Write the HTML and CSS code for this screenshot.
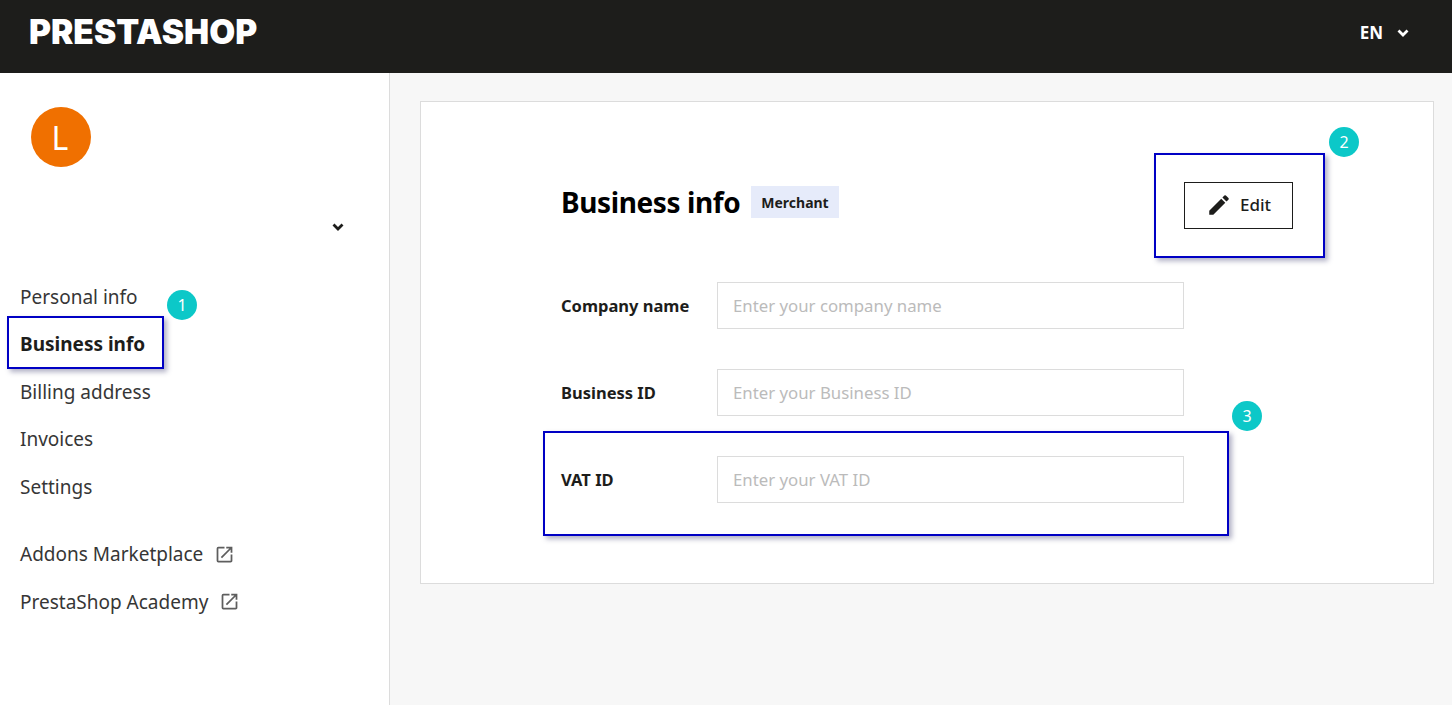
FILE: index.html
```html
<!DOCTYPE html>
<html lang="en">
<head>
<meta charset="utf-8">
<title>Business info</title>
<link rel="stylesheet" href="styles.css">
</head>
<body>
<header class="topbar">
  <div class="logo">PRESTASHOP</div>
  <div class="lang">
    <span>EN</span>
    <svg class="chev" viewBox="0 0 12 8" width="12" height="8"><path d="M1.500 1.500 6 6l4.500-4.500" fill="none" stroke="currentColor" stroke-width="2.800"/></svg>
  </div>
</header>
<div class="layout">
  <aside class="sidebar">
    <div class="avatar">L</div>
    <div class="account">
      <svg class="chev" viewBox="0 0 12 8" width="12" height="8"><path d="M1.500 1.500 6 6l4.500-4.500" fill="none" stroke="currentColor" stroke-width="2.800"/></svg>
    </div>
    <nav class="nav">
      <a class="nav-item">Personal info</a>
      <a class="nav-item active">Business info</a>
      <a class="nav-item">Billing address</a>
      <a class="nav-item">Invoices</a>
      <a class="nav-item">Settings</a>
    </nav>
    <nav class="nav nav-ext">
      <a class="nav-item">Addons Marketplace
        <svg class="ext" viewBox="0 0 24 24" width="21" height="21"><path d="M19 19H5V5h7V3H5a2 2 0 0 0-2 2v14a2 2 0 0 0 2 2h14c1.100 0 2-.9 2-2v-7h-2v7zM14 3v2h3.590l-9.830 9.830 1.410 1.410L19 6.410V10h2V3h-7z"/></svg>
      </a>
      <a class="nav-item">PrestaShop Academy
        <svg class="ext" viewBox="0 0 24 24" width="21" height="21"><path d="M19 19H5V5h7V3H5a2 2 0 0 0-2 2v14a2 2 0 0 0 2 2h14c1.100 0 2-.9 2-2v-7h-2v7zM14 3v2h3.590l-9.830 9.830 1.410 1.410L19 6.410V10h2V3h-7z"/></svg>
      </a>
    </nav>
  </aside>
  <main class="content">
    <section class="card">
      <div class="card-head">
        <div class="title-group">
          <h1 class="title">Business info</h1>
          <span class="tag">Merchant</span>
        </div>
        <button class="edit-btn" type="button">
          <svg viewBox="0 0 24 24" width="26" height="26"><path d="M3 17.250V21h3.750L17.810 9.940l-3.750-3.750L3 17.250zM20.710 7.040a1 1 0 0 0 0-1.410l-2.340-2.340a1 1 0 0 0-1.410 0l-1.830 1.830 3.750 3.750 1.830-1.830z"/></svg>
          Edit
        </button>
      </div>
      <div class="fields">
        <label class="field"><span class="field-label">Company name</span><input class="input" placeholder="Enter your company name"></label>
        <label class="field"><span class="field-label">Business ID</span><input class="input" placeholder="Enter your Business ID"></label>
        <label class="field"><span class="field-label">VAT ID</span><input class="input" placeholder="Enter your VAT ID"></label>
      </div>
    </section>
  </main>
</div>
<div class="mark mark-1"></div>
<div class="mark mark-2"></div>
<div class="mark mark-3"></div>
<div class="step step-1">1</div>
<div class="step step-2">2</div>
<div class="step step-3">3</div>
</body>
</html>
```
FILE: styles.css
```css
* { box-sizing: border-box; }
html, body { margin: 0; height: 705px; overflow: hidden; }
body {
  position: relative;
  display: flex;
  flex-direction: column;
  font-family: "Noto Sans", "Open Sans", sans-serif;
  color: #1d1d1b;
  background: #fff;
}
.topbar {
  flex: none;
  height: 73px;
  background: #1d1d1b;
  color: #fff;
  display: flex;
  align-items: center;
  justify-content: space-between;
  padding: 0 43px 8px 29px;
}
.logo {
  font-family: Inter, "Liberation Sans", sans-serif;
  font-weight: 900;
  font-size: 33.500px;
  line-height: 1;
}
.lang {
  display: flex;
  align-items: center;
  gap: 14px;
  font-size: 17px;
  font-weight: 700;
}
.chev { display: block; }
.layout { flex: 1; display: flex; min-height: 0; }
.sidebar {
  flex: none;
  width: 390px;
  border-right: 1px solid #dcdcdc;
  padding: 34px 0 0 20px;
}
.avatar {
  width: 60px;
  height: 60px;
  margin-left: 11px;
  padding-right: 2px;
  border-radius: 50%;
  background: #f07000;
  color: #fff;
  font-size: 32px;
  display: flex;
  align-items: center;
  justify-content: center;
}
.account {
  height: 44px;
  margin: 33px 45px 0 0;
  display: flex;
  justify-content: flex-end;
  padding-top: 23px;
}
.nav { display: flex; flex-direction: column; }
.account + .nav { margin-top: 29px; }
.nav-ext { margin-top: 20px; }
.nav-item {
  height: 47.500px;
  display: flex;
  align-items: center;
  gap: 11px;
  font-size: 19px;
  color: #363636;
}
.nav-item.active { font-weight: 700; color: #1d1d1b; }
.ext { fill: #5e5e5e; flex: none; }
.content {
  flex: 1;
  background: #f7f7f7;
  padding: 28px 18px 0 30px;
}
.card {
  background: #fff;
  border: 1px solid #dcdcdc;
  padding: 80px 140px;
}
.card-head {
  display: flex;
  align-items: center;
  justify-content: space-between;
  margin-bottom: 53px;
}
.title-group { display: flex; align-items: center; gap: 11px; padding-bottom: 7px; }
.title {
  margin: 0;
  font-size: 28px;
  font-weight: 700;
  line-height: 40px;
  letter-spacing: -.4px;
  color: #000;
}
.tag {
  background: #e6ebfa;
  font-size: 14px;
  font-weight: 700;
  padding: 0 10px;
  height: 32px;
  display: flex;
  align-items: center;
}
.edit-btn {
  width: 109px;
  height: 47px;
  background: #fff;
  border: 1px solid #1d1d1b;
  color: #1d1d1b;
  font: 500 17px "Noto Sans", sans-serif;
  display: flex;
  align-items: center;
  justify-content: center;
  gap: 8px;
  padding: 0 0 2px;
}
.edit-btn svg { fill: #1d1d1b; }
.fields { display: flex; flex-direction: column; gap: 40px; }
.field { display: flex; align-items: center; }
.field-label {
  width: 156px;
  font-size: 16.500px;
  font-weight: 700;
}
.input {
  width: 467px;
  height: 47px;
  border: 1px solid #dcdcdc;
  padding: 0 15px;
  font: 16.800px "Noto Sans", sans-serif;
  outline: none;
}
.input::placeholder { color: #bbb; opacity: 1; }
.mark {
  position: absolute;
  border: 2px solid #0000c4;
  box-shadow: 3px 3px 5px rgba(60, 60, 110, .4);
}
.mark-1 { left: 7px; top: 316px; width: 157px; height: 53px; }
.mark-2 { left: 1154px; top: 153px; width: 171px; height: 105px; }
.mark-3 { left: 543px; top: 431px; width: 686px; height: 105px; }
.step {
  position: absolute;
  width: 30px;
  height: 30px;
  border-radius: 50%;
  background: #0cc8c8;
  color: #fff;
  font-size: 16px;
  display: flex;
  align-items: center;
  justify-content: center;
}
.step-1 { left: 167px; top: 290px; }
.step-2 { left: 1329px; top: 127px; }
.step-3 { left: 1232px; top: 401px; }
```
